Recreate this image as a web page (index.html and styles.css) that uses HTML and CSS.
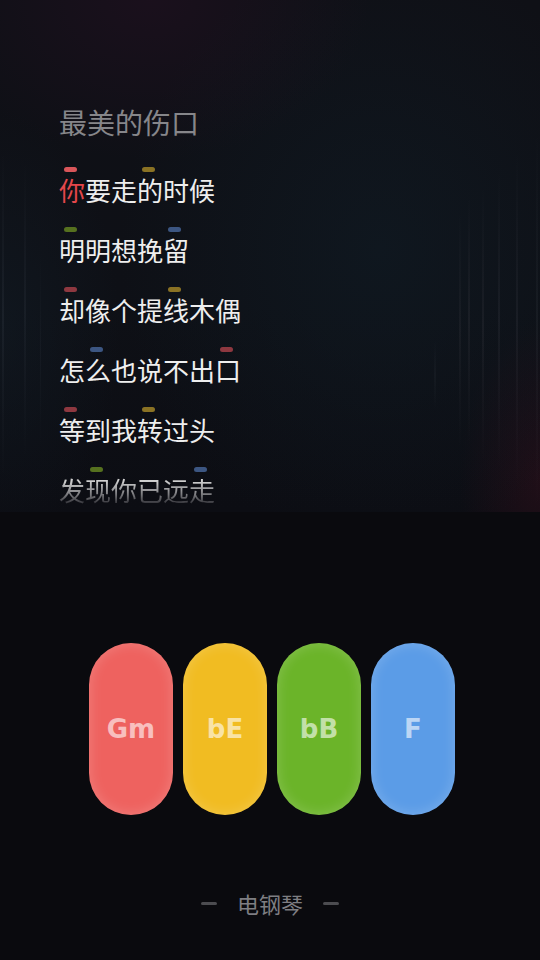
FILE: index.html
```html
<!DOCTYPE html>
<html lang="zh-CN">
<head>
<meta charset="utf-8">
<title>最美的伤口 - 电钢琴</title>
<link rel="stylesheet" href="styles.css">
</head>
<body>
<div class="screen">
  <section class="visual">
    <div class="lyrics">
      <h1 class="title">最美的伤口</h1>

      <div class="line">
        <div class="chords"><i class="dot red on at1"></i><i class="dot yellow at4"></i></div>
        <p class="text"><span class="sung">你</span>要走的时候</p>
      </div>

      <div class="line">
        <div class="chords"><i class="dot green at1"></i><i class="dot blue at5"></i></div>
        <p class="text">明明想挽留</p>
      </div>

      <div class="line">
        <div class="chords"><i class="dot red at1"></i><i class="dot yellow at5"></i></div>
        <p class="text">却像个提线木偶</p>
      </div>

      <div class="line">
        <div class="chords"><i class="dot blue at2"></i><i class="dot red at7"></i></div>
        <p class="text">怎么也说不出口</p>
      </div>

      <div class="line">
        <div class="chords"><i class="dot red at1"></i><i class="dot yellow at4"></i></div>
        <p class="text">等到我转过头</p>
      </div>

      <div class="line fading">
        <div class="chords"><i class="dot green at2"></i><i class="dot blue at6"></i></div>
        <p class="text">发现你已远走</p>
      </div>
    </div>
  </section>

  <section class="pads">
    <button class="pad pad-red">Gm</button>
    <button class="pad pad-yellow">bE</button>
    <button class="pad pad-green">bB</button>
    <button class="pad pad-blue">F</button>
  </section>

  <footer class="instrument">
    <span class="dash"></span>
    <span class="name">电钢琴</span>
    <span class="dash"></span>
  </footer>
</div>
</body>
</html>
```

FILE: styles.css
```css
* { box-sizing: border-box; }

html, body {
  margin: 0;
  padding: 0;
  background: #0a0a0e;
}

.screen {
  width: 540px;
  height: 960px;
  overflow: hidden;
  background: #0a0a0e;
  font-family: "Noto Sans CJK SC", "Noto Sans", sans-serif;
}

/* ---------- top lyrics area ---------- */
.visual {
  height: 512px;
  padding: 104px 0 0 59px;
  background-color: #0e0f15;
  background-image:
    /* faint vertical light strings */
    linear-gradient(to bottom, rgba(255,255,255,0), rgba(190,200,220,0.06), rgba(255,255,255,0)),
    linear-gradient(to bottom, rgba(255,255,255,0), rgba(190,200,220,0.05), rgba(255,255,255,0)),
    linear-gradient(to bottom, rgba(255,255,255,0), rgba(190,200,220,0.04), rgba(255,255,255,0)),
    linear-gradient(to bottom, rgba(255,255,255,0), rgba(200,190,210,0.06), rgba(255,255,255,0)),
    linear-gradient(to bottom, rgba(255,255,255,0), rgba(200,190,210,0.06), rgba(255,255,255,0)),
    linear-gradient(to bottom, rgba(255,255,255,0), rgba(210,190,200,0.06), rgba(255,255,255,0)),
    linear-gradient(to bottom, rgba(255,255,255,0), rgba(210,190,200,0.06), rgba(255,255,255,0)),
    linear-gradient(to bottom, rgba(255,255,255,0), rgba(210,190,200,0.05), rgba(255,255,255,0)),
    linear-gradient(to bottom, rgba(255,255,255,0), rgba(190,200,210,0.04), rgba(255,255,255,0)),
    linear-gradient(to bottom, rgba(255,255,255,0), rgba(190,200,210,0.05), rgba(255,255,255,0)),
    /* glows */
    radial-gradient(ellipse 220px 160px at 150px 0px, rgba(40,16,36,0.45), rgba(40,16,36,0)),
    radial-gradient(ellipse 260px 300px at 380px 250px, rgba(16,30,40,0.5), rgba(16,30,40,0)),
    radial-gradient(ellipse 80px 160px at 540px 480px, rgba(60,16,30,0.4), rgba(60,16,30,0)),
    radial-gradient(ellipse 120px 220px at 0px 330px, rgba(18,30,40,0.45), rgba(18,30,40,0)),
    linear-gradient(to bottom, #0f1016 0%, #0e1016 60%, #0c0d13 100%);
  background-size:
    2px 330px, 2px 300px, 1px 200px,
    2px 340px, 2px 300px, 2px 280px, 2px 250px, 2px 240px,
    2px 70px, 2px 380px,
    100% 100%, 100% 100%, 100% 100%, 100% 100%, 100% 100%;
  background-position:
    2px 150px, 24px 160px, 40px 250px,
    516px 150px, 498px 170px, 482px 185px, 468px 195px, 459px 210px,
    434px 340px, 536px 130px,
    0 0, 0 0, 0 0, 0 0, 0 0;
  background-repeat: no-repeat;
}

.title {
  margin: 0 0 20px;
  font-size: 28px;
  line-height: 36px;
  font-weight: 400;
  color: #86868a;
}

.line {
  height: 60px;
}

.chords {
  display: grid;
  grid-template-columns: repeat(8, 26px);
  height: 15px;
  padding-top: 7px;
  align-items: start;
}

.dot {
  display: block;
  grid-row: 1;
  width: 13px;
  height: 5px;
  margin-left: 5px;
  border-radius: 3px;
}

.at1 { grid-column: 1; }
.at2 { grid-column: 2; }
.at3 { grid-column: 3; }
.at4 { grid-column: 4; }
.at5 { grid-column: 5; }
.at6 { grid-column: 6; }
.at7 { grid-column: 7; }

.dot.red    { background: #8e3840; }
.dot.red.on { background: #d9565a; }
.dot.yellow { background: #8a7224; }
.dot.green  { background: #56711f; }
.dot.blue   { background: #3c5682; }

.text {
  margin: 0;
  font-size: 26px;
  line-height: 30px;
  color: #eeeeee;
  white-space: nowrap;
}

.sung { color: #e4474b; }

.fading .text {
  display: inline-block;
  color: transparent;
  background: linear-gradient(to bottom, #d0d0d0 20%, #7a7a7e 65%, #2a2a30 100%);
  -webkit-background-clip: text;
  background-clip: text;
}

/* ---------- chord pads ---------- */
.pads {
  display: flex;
  justify-content: center;
  gap: 10px;
  margin-top: 131px;
  padding-left: 4px;
}

.pad {
  width: 84px;
  height: 172px;
  border: 0;
  padding: 0;
  border-radius: 42px;
  font-family: "DejaVu Sans", "Liberation Sans", sans-serif;
  font-weight: 700;
  font-size: 26px;
  color: rgba(255, 255, 255, 0.6);
  box-shadow: inset 0 0 14px rgba(255, 255, 255, 0.2);
}

.pad-red    { background: #ee625f; }
.pad-yellow { background: #f1bc22; }
.pad-green  { background: #6bb429; }
.pad-blue   { background: #5b9ce7; }

/* ---------- instrument label ---------- */
.instrument {
  display: flex;
  align-items: center;
  justify-content: center;
  gap: 20px;
  margin-top: 73px;
  height: 30px;
}

.dash {
  width: 16px;
  height: 3px;
  border-radius: 2px;
  background: #4c4c50;
}

.name {
  font-size: 22px;
  line-height: 30px;
  color: #7e7e82;
}
```
